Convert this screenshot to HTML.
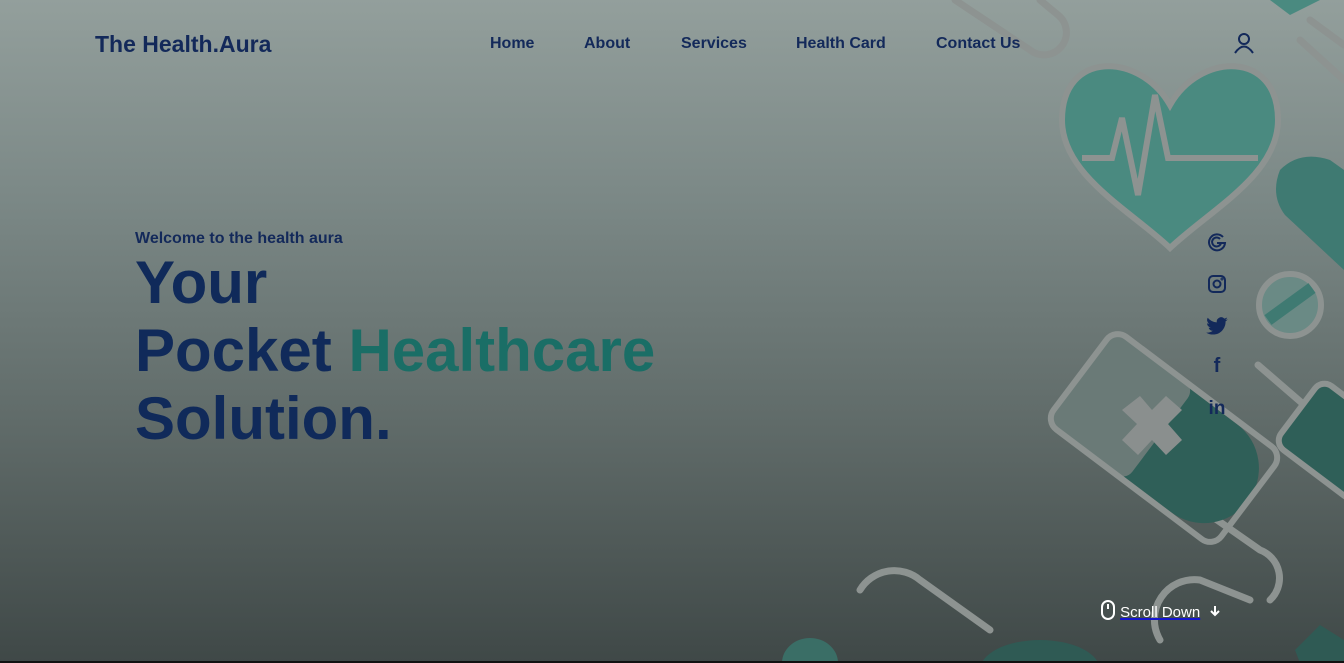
<!DOCTYPE html>
<html><head><meta charset="utf-8"><style>
*{margin:0;padding:0;box-sizing:border-box}
html,body{width:1344px;height:663px;overflow:hidden}
body{font-family:"Liberation Sans",sans-serif;position:relative;background:linear-gradient(180deg,#939f9c 0%,#7b8886 30%,#5f6a68 65%,#3f4847 100%)}
.bot{position:absolute;left:0;bottom:0;width:1344px;height:2px;background:#111}
.logo{position:absolute;left:95px;top:31px;font-size:23px;font-weight:bold;color:#13295a}
.nav a{position:absolute;top:35px;font-size:16px;font-weight:bold;color:#13295a;text-decoration:none}
.wel{position:absolute;left:135px;top:230px;font-size:16px;font-weight:bold;color:#13295a}
h1{position:absolute;left:135px;top:249px;font-size:60px;line-height:68px;font-weight:bold;color:#102a5a}
h1 span{color:#1a6e66}
.soc{position:absolute;left:1206px;width:22px;text-align:center;color:#13295a}
.sd{position:absolute;left:1100px;top:600px;color:#fff;font-size:15px;white-space:nowrap}
.sd u{text-decoration-color:#1515d0;text-decoration-thickness:2px}
</style></head><body>
<svg width="1344" height="663" style="position:absolute;left:0;top:0">
<g fill="none" stroke="#8d9391" stroke-width="7" stroke-linecap="round">
<path d="M955 0 L1030 50 A20 20 0 0 0 1058 15 L1040 0"/>
<path d="M1310 20 L1344 45 M1300 40 L1344 80"/>
<path d="M1258 365 L1310 410"/>
<path d="M860 590 A40 40 0 0 1 920 580 L990 630"/>
<path d="M1210 515 L1260 550 A30 30 0 0 1 1270 600"/>
<path d="M1160 640 A40 40 0 0 1 1200 580 L1250 600"/>
</g>
<path d="M1170 105 C1140 52 1062 50 1062 120 C1062 175 1130 210 1170 248 C1210 210 1278 175 1278 120 C1278 50 1200 52 1170 105Z" fill="#4a8a80" stroke="#8d9391" stroke-width="6"/>
<path d="M1082 158 L1112 158 L1122 118 L1138 195 L1155 95 L1168 158 L1258 158" fill="none" stroke="#8d9391" stroke-width="6"/>
<path d="M1280 170 Q1300 150 1330 160 L1344 170 L1344 270 L1285 215 Q1270 195 1280 170Z" fill="#3f7a72"/>
<circle cx="1290" cy="305" r="31" fill="#6a8a85" stroke="#8d9391" stroke-width="6"/>
<path d="M1268 320 L1312 288" stroke="#3f7a72" stroke-width="12"/>
<g transform="translate(1160 435) rotate(37)">
<rect x="-90" y="-55" width="200" height="110" rx="55" fill="#2f5f58"/>
<rect x="-100" y="-58" width="100" height="116" rx="12" fill="#6a7a77"/>
<rect x="-100" y="-58" width="210" height="116" rx="14" fill="none" stroke="#8d9391" stroke-width="6"/>
</g>
<path d="M1122 410 L1140 396 L1152 410 L1166 396 L1182 410 L1168 424 L1182 440 L1166 455 L1152 440 L1138 455 L1122 440 L1137 424Z" fill="#8a8f8e"/>
<g transform="translate(1330 435) rotate(37)"><rect x="-40" y="-40" width="100" height="80" rx="12" fill="#2f5f58" stroke="#8d9391" stroke-width="6"/></g>
<ellipse cx="810" cy="663" rx="28" ry="25" fill="#3a6e66"/>
<ellipse cx="1040" cy="670" rx="60" ry="30" fill="#2f5a54"/>
<path d="M1295 650 L1320 625 L1344 640 L1344 663 L1300 663Z" fill="#2f5a54"/>
<path d="M1270 0 L1290 15 L1320 0Z" fill="#4a8a80"/>
</svg>
<div class="logo">The Health.Aura</div>
<div class="nav"><a style="left:490px">Home</a><a style="left:584px">About</a><a style="left:681px">Services</a><a style="left:796px">Health Card</a><a style="left:936px">Contact Us</a></div>
<svg style="position:absolute;left:1233px;top:32px" width="22" height="22" viewBox="0 0 22 22" fill="none" stroke="#13295a" stroke-width="2"><circle cx="11" cy="7" r="5"/><path d="M2 21 Q11 8 20 21"/></svg>
<div class="wel">Welcome to the health aura</div>
<h1>Your<br>Pocket <span>Healthcare</span><br>Solution.</h1>
<svg class="soc" style="top:232px" width="20" height="20" viewBox="0 0 20 20" fill="none" stroke="#13295a" stroke-width="2"><path d="M16 5 A8 8 0 1 0 18 11 L10 11"/><path d="M13 7 A4.5 4.5 0 1 0 14 11"/></svg>
<svg class="soc" style="top:274px" width="20" height="20" viewBox="0 0 20 20" fill="none" stroke="#13295a" stroke-width="2"><rect x="2" y="2" width="16" height="16" rx="4"/><circle cx="10" cy="10" r="3.5"/><circle cx="15" cy="5" r=".5"/></svg>
<svg class="soc" style="top:317px" width="20" height="18" viewBox="0 0 24 20" fill="#13295a"><path d="M24 2.5a10 10 0 0 1-2.8.8A5 5 0 0 0 23.3.6a10 10 0 0 1-3.1 1.2A4.9 4.9 0 0 0 11.8 6 14 14 0 0 1 1.7.9a4.9 4.9 0 0 0 1.5 6.6 4.9 4.9 0 0 1-2.200-.6 4.9 4.9 0 0 0 3.9 4.9 4.9 4.9 0 0 1-2.2.1 4.9 4.9 0 0 0 4.6 3.4A9.9 9.9 0 0 1 0 17.3 14 14 0 0 0 7.5 19.5c9 0 14-7.5 14-14v-.6A10 10 0 0 0 24 2.5z"/></svg>
<div class="soc" style="top:355px;font-size:20px;font-weight:bold">f</div>
<div class="soc" style="top:398px;font-size:19px;font-weight:bold">in</div>
<div class="sd"><svg width="16" height="20" viewBox="0 0 16 20" style="vertical-align:-3px" fill="none" stroke="#fff" stroke-width="2"><rect x="2" y="1" width="12" height="18" rx="6"/><path d="M8 4v5"/></svg> <u>Scroll Down</u> &nbsp;<svg width="12" height="12" viewBox="0 0 12 12" fill="none" stroke="#fff" stroke-width="2"><path d="M6 1v9M2 6l4 4 4-4"/></svg></div>
<div class="bot"></div>
</body></html>
